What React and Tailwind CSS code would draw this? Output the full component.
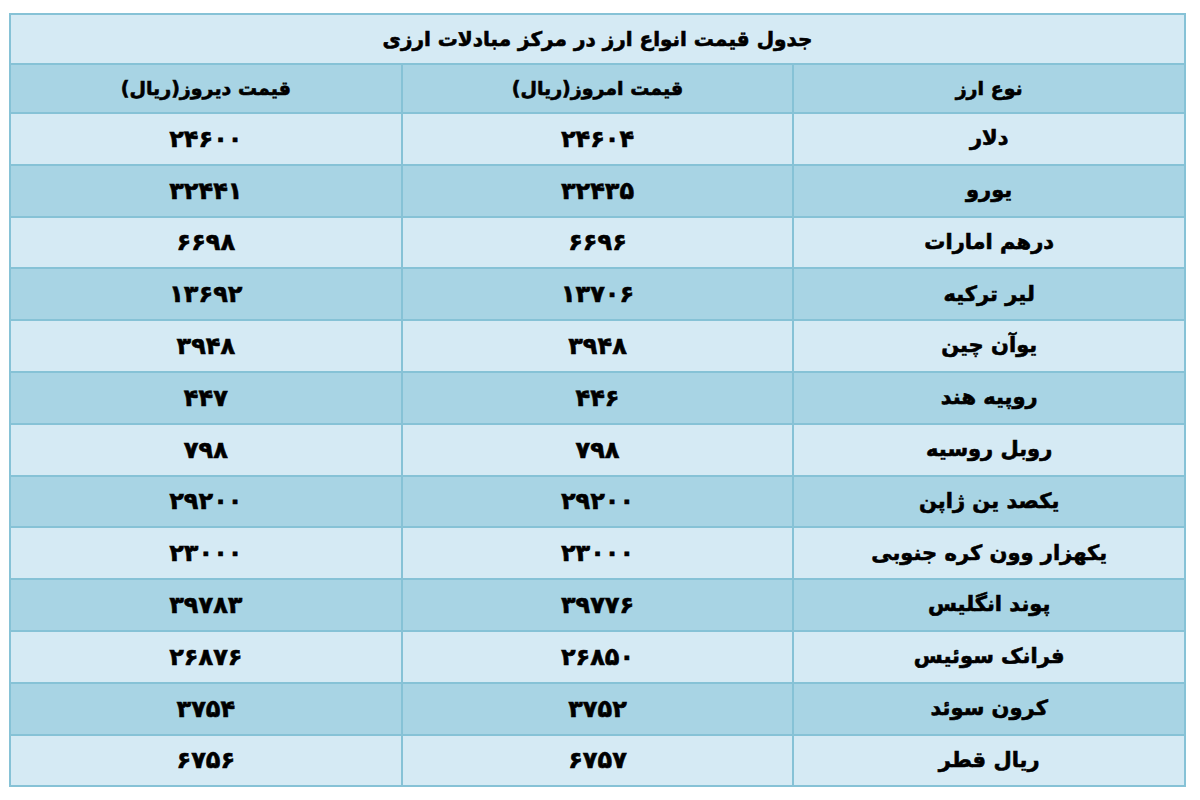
import React from "react";

const fa = (n) => String(n).replace(/[0-9]/g, (d) => "۰۱۲۳۴۵۶۷۸۹"[d]);

const rows = [
  ["دلار", 24604, 24600],
  ["یورو", 32435, 32441],
  ["درهم امارات", 6696, 6698],
  ["لیر ترکیه", 13706, 13692],
  ["یوآن چین", 3948, 3948],
  ["روپیه هند", 446, 447],
  ["روبل روسیه", 798, 798],
  ["یکصد ین ژاپن", 29200, 29200],
  ["یکهزار وون کره جنوبی", 23000, 23000],
  ["پوند انگلیس", 39776, 39783],
  ["فرانک سوئیس", 26850, 26876],
  ["کرون سوئد", 3752, 3754],
  ["ریال قطر", 6757, 6756],
];

export default function App() {
  return (
    <div className="w-[1200px] h-[800px] bg-white pt-[13px] pl-[9px]" style={{ fontFamily: '"DejaVu Sans", sans-serif' }}>
      <table dir="rtl" className="w-[1177px] border-collapse border-2 border-[#86c2d6] text-black font-bold [-webkit-text-stroke:0.6px_black]">
        <tbody>
          <tr className="h-[50px] bg-[#d5eaf4]">
            <td colSpan={3} className="border-2 border-[#86c2d6] text-center text-[20px]">
              جدول قیمت انواع ارز در مرکز مبادلات ارزی
            </td>
          </tr>
          <tr className="h-[49px] bg-[#a8d4e4]">
            <td className="w-1/3 border-2 border-[#86c2d6] text-center text-[19px]">نوع ارز</td>
            <td className="w-1/3 border-2 border-[#86c2d6] text-center text-[19px]">قیمت امروز(ریال)</td>
            <td className="w-1/3 border-2 border-[#86c2d6] text-center text-[19px]">قیمت دیروز(ریال)</td>
          </tr>
          {rows.map(([name, a, b], i) => (
            <tr key={name} className={`h-[51.8px] ${i % 2 === 0 ? "bg-[#d5eaf4]" : "bg-[#a8d4e4]"}`}>
              <td className="border-2 border-[#86c2d6] text-center text-[21px]">{name}</td>
              <td className="border-2 border-[#86c2d6] text-center text-[24px]">{fa(a)}</td>
              <td className="border-2 border-[#86c2d6] text-center text-[24px]">{fa(b)}</td>
            </tr>
          ))}
        </tbody>
      </table>
    </div>
  );
}
